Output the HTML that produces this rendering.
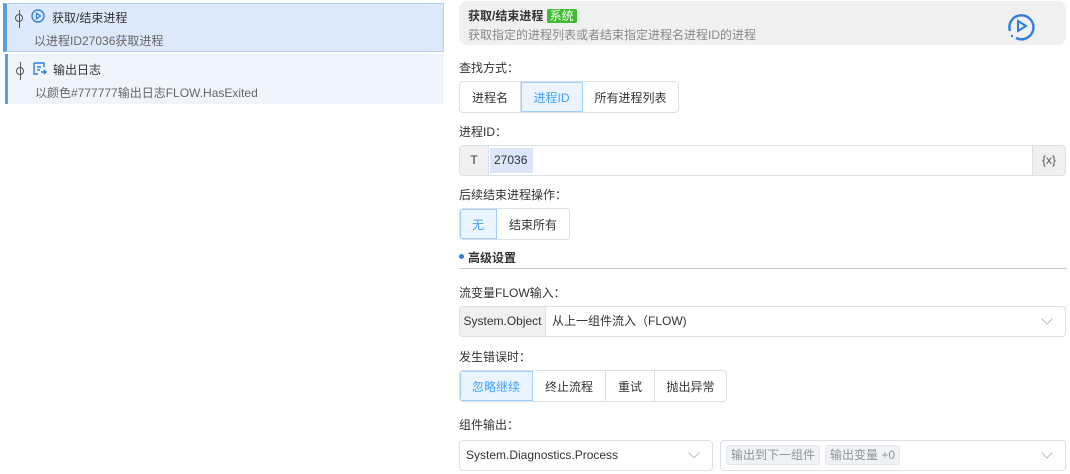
<!DOCTYPE html>
<html><head><meta charset="utf-8"><style>
*{box-sizing:border-box;margin:0;padding:0}
body{width:1070px;height:474px;background:#fff;font-family:"Liberation Sans","Noto Sans CJK SC",sans-serif;font-size:12px;color:#333;position:relative;overflow:hidden}
.a{position:absolute}
.item{position:absolute;left:3px;width:441px}
.lbl{position:absolute;left:459px;font-size:12px;color:#333}
.grp{position:absolute;display:flex;height:32px;border:1px solid #dcdfe6;border-radius:4px;overflow:hidden;background:#fff}
.grp div{display:flex;align-items:center;justify-content:center;border-right:1px solid #dcdfe6;color:#333}
.grp div:last-child{border-right:none}
.grp .on{background:#ecf5ff;color:#409eff;outline:1px solid #a0cfff;outline-offset:-1px}
.box{position:absolute;height:32px;border:1px solid #dcdfe6;border-radius:4px;background:#fff}
.chev{position:absolute;top:10px;width:8px;height:8px;border-right:1px solid #bbb;border-bottom:1px solid #bbb;transform:rotate(45deg)}
.tag{display:inline-block;background:#f0f2f5;border:1px solid #e4e7ed;color:#909399;border-radius:3px;padding:0 4px;height:20px;line-height:18px;margin-right:5px}
</style></head><body>
<div class="item" style="top:3px;height:49px;background:#dde8fb;border:1px solid #b3cdf3;border-left:4px solid #5b9be0"></div>
<div class="a" style="left:15px;top:14px;width:8px;height:8px;border:1px solid #555;border-radius:50%"></div>
<div class="a" style="left:19px;top:10px;width:1px;height:18px;background:#555;z-index:-0"></div>
<svg class="a" style="left:31px;top:9px" width="14" height="14"><circle cx="7" cy="7" r="6" fill="none" stroke="#2f7de1" stroke-width="1.4"/><path d="M5.5 4.3L9.5 7L5.5 9.7Z" fill="none" stroke="#2f7de1" stroke-width="1.2"/></svg>
<div class="a" style="left:52px;top:9px;font-size:12px;color:#333">获取/结束进程</div>
<div class="a" style="left:34px;top:32px;color:#666">以进程ID27036获取进程</div>
<div class="item" style="top:54px;left:5px;width:439px;height:50px;background:#f0f5fd;border-left:3px solid #5b9be0"></div>
<div class="a" style="left:16px;top:67px;width:8px;height:8px;border:1px solid #555;border-radius:50%"></div>
<div class="a" style="left:20px;top:62px;width:1px;height:18px;background:#555"></div>
<svg class="a" style="left:32px;top:61px" width="15" height="15" fill="none" stroke="#2f7de1" stroke-width="1.4"><path d="M2 2h10v4M2 2v11h4M5 6h4M5 9h3M9 11h5M12 9l2 2-2 2"/></svg>
<div class="a" style="left:53px;top:61px;color:#333">输出日志</div>
<div class="a" style="left:35px;top:84px;color:#666">以颜色#777777输出日志FLOW.HasExited</div>

<div class="a" style="left:459px;top:1px;width:607px;height:44px;background:#f0f0f0;border-radius:8px"></div>
<div class="a" style="left:468px;top:7px;font-weight:bold;color:#333">获取/结束进程 <span style="background:#3ebd2e;color:#fff;font-weight:normal;padding:0 3px;border-radius:2px">系统</span></div>
<div class="a" style="left:468px;top:26px;color:#888">获取指定的进程列表或者结束指定进程名进程ID的进程</div>
<svg class="a" style="left:1006px;top:12px" width="32" height="30" fill="none" stroke="#2f7de1" stroke-width="2.4"><path d="M4 19A12 12 0 1 1 10 26"/><circle cx="6" cy="24" r="1.2" fill="#2f7de1" stroke="none"/><path d="M12 9L20 14L12 19Z" stroke-width="2"/></svg>

<div class="lbl" style="top:59px">查找方式：</div>
<div class="grp" style="left:459px;top:81px;width:220px"><div style="width:61px">进程名</div><div class="on" style="width:62px">进程ID</div><div style="flex:1">所有进程列表</div></div>
<div class="lbl" style="top:123px">进程ID：</div>
<div class="box" style="left:459px;top:145px;width:607px;height:31px;overflow:hidden">
<div class="a" style="left:0;top:0;width:29px;height:29px;background:#f0f0f0;border-right:1px solid #dcdfe6;text-align:center;line-height:29px">T</div>
<div class="a" style="left:30px;top:2px;width:43px;height:25px;background:#dbe6fa;line-height:25px;padding-left:4px">27036</div>
<div class="a" style="right:0;top:0;width:33px;height:29px;background:#f0f0f0;border-left:1px solid #dcdfe6;text-align:center;line-height:29px;color:#555">{x}</div></div>
<div class="lbl" style="top:186px">后续结束进程操作：</div>
<div class="grp" style="left:459px;top:208px;width:111px"><div class="on" style="width:37px">无</div><div style="flex:1">结束所有</div></div>
<div class="a" style="left:459px;top:254px;width:5px;height:5px;background:#2f7de1;border-radius:50%"></div>
<div class="a" style="left:468px;top:249px;font-weight:bold">高级设置</div>
<div class="a" style="left:459px;top:268px;width:608px;height:1px;background:#ccc"></div>
<div class="lbl" style="top:284px">流变量FLOW输入：</div>
<div class="box" style="left:459px;top:306px;width:607px;height:31px;overflow:hidden">
<div class="a" style="left:0;top:0;width:86px;height:29px;background:#f0f0f0;border-right:1px solid #dcdfe6;text-align:center;line-height:29px">System.Object</div>
<div class="a" style="left:92px;top:0;line-height:29px">从上一组件流入（FLOW)</div><div class="chev" style="right:14px;top:8px"></div></div>
<div class="lbl" style="top:348px">发生错误时：</div>
<div class="grp" style="left:459px;top:370px;width:268px"><div class="on" style="width:73px">忽略继续</div><div style="width:73px">终止流程</div><div style="width:49px">重试</div><div style="flex:1">抛出异常</div></div>
<div class="lbl" style="top:416px">组件输出：</div>
<div class="box" style="left:459px;top:440px;width:254px;height:31px"><div class="a" style="left:6px;top:0;line-height:29px">System.Diagnostics.Process</div><div class="chev" style="right:14px;top:8px"></div></div>
<div class="box" style="left:720px;top:440px;width:346px;height:31px"><div class="a" style="left:5px;top:4px"><span class="tag">输出到下一组件</span><span class="tag">输出变量 +0</span></div><div class="chev" style="right:14px;top:8px"></div></div>
</body></html>
